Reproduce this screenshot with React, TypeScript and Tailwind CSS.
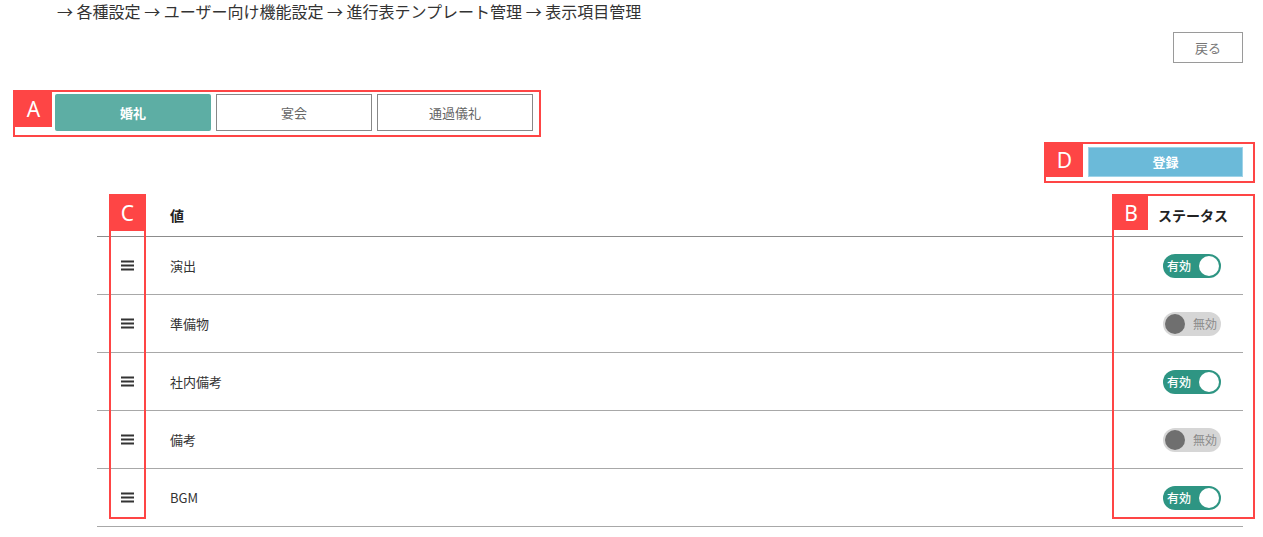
import React from "react";

const rows = [
  { name: "演出", on: true },
  { name: "準備物", on: false },
  { name: "社内備考", on: true },
  { name: "備考", on: false },
  { name: "BGM", on: true },
];

const Label = ({ text, className }: { text: string; className: string }) => (
  <div
    className={`flex items-center justify-center bg-[#fe4545] text-white text-[21px] leading-none ${className}`}
    style={{ fontFamily: '"Noto Sans", sans-serif' }}
  >
    {text}
  </div>
);

const Toggle = ({ on }: { on: boolean }) =>
  on ? (
    <div className="flex h-[24px] w-[58px] items-center justify-between rounded-full bg-[#2e9583] pl-[4px] pr-[2px]">
      <span className="text-[12px] font-medium text-white">有効</span>
      <span className="h-[20px] w-[20px] rounded-full bg-white" />
    </div>
  ) : (
    <div className="flex h-[24px] w-[58px] items-center justify-between rounded-full bg-[#d6d6d6] pl-[2px] pr-[4px]">
      <span className="h-[20px] w-[20px] rounded-full bg-[#6f6f6f]" />
      <span className="text-[12px] text-[#8a8a8a]">無効</span>
    </div>
  );

const Hamburger = () => (
  <svg width="13" height="11" viewBox="0 0 13 11">
    <rect x="0" y="0.5" width="13" height="2" fill="#333" />
    <rect x="0" y="4.5" width="13" height="2" fill="#333" />
    <rect x="0" y="8.5" width="13" height="2" fill="#333" />
  </svg>
);

export default function App() {
  return (
    <div
      className="w-[1263px] h-[537px] overflow-hidden bg-white text-[#333]"
      style={{ fontFamily: '"Noto Sans CJK JP", "Noto Sans", sans-serif' }}
    >
      <div className="pl-[57px] pt-[1px] text-[16px] leading-[21px] text-[#333]">
        → 各種設定 → ユーザー向け機能設定 → 進行表テンプレート管理 → 表示項目管理
      </div>

      <div className="flex justify-end pr-[20px] pt-[10px]">
        <button className="h-[31px] w-[70px] border border-[#9a9a9a] bg-white text-[13px] text-[#777]">
          戻る
        </button>
      </div>

      <div className="ml-[13px] mt-[27px] flex w-[528px] items-start border-2 border-[#fe4545] pb-[4px]">
        <Label text="A" className="h-[35px] w-[37px]" />
        <div className="ml-[3px] mt-[2px] flex gap-[5px]">
          <button className="h-[37px] w-[156px] rounded-[2px] bg-[#5daea4] text-[13px] font-bold text-white">
            婚礼
          </button>
          <button className="h-[37px] w-[156px] border border-[#888] bg-white text-[13px] text-[#666]">
            宴会
          </button>
          <button className="h-[37px] w-[156px] border border-[#888] bg-white text-[13px] text-[#666]">
            通過儀礼
          </button>
        </div>
      </div>

      <div className="flex justify-end pr-[8px] pt-[5px]">
        <div className="flex w-[211px] items-start border-2 border-[#fe4545] pb-[4px] pr-[10px]">
          <Label text="D" className="h-[33px] w-[37px]" />
          <button className="ml-[5px] mt-[3px] h-[30px] w-[155px] border border-[#9fd3e8] bg-[#6bbad9] text-[13px] font-bold text-white">
            登録
          </button>
        </div>
      </div>

      <div className="relative ml-[97px] mt-[11px] w-[1146px]">
        <div className="flex h-[43px] items-center border-b border-[#8c8c8c]">
          <div className="w-[61px]" />
          <div className="flex-1 pl-[12px] text-[14px] font-semibold text-[#222]">値</div>
          <div className="pr-[15px] text-[14px] font-semibold text-[#222]">ステータス</div>
        </div>
        {rows.map((r) => (
          <div key={r.name} className="flex h-[58px] items-center border-b border-[#a8a8a8]">
            <div className="flex w-[61px] justify-center">
              <Hamburger />
            </div>
            <div className="flex-1 pl-[12px] text-[13px] text-[#333]">{r.name}</div>
            <div className="pr-[22px]">
              <Toggle on={r.on} />
            </div>
          </div>
        ))}

        <div className="absolute left-[12px] top-0 h-[325px] w-[37px] border-2 border-[#fe4545]">
          <Label text="C" className="h-[35px] w-full" />
        </div>
        <div className="absolute left-[1015px] top-0 h-[325px] w-[143px] border-2 border-[#fe4545]">
          <Label text="B" className="h-[34px] w-[34px]" />
        </div>
      </div>
    </div>
  );
}
